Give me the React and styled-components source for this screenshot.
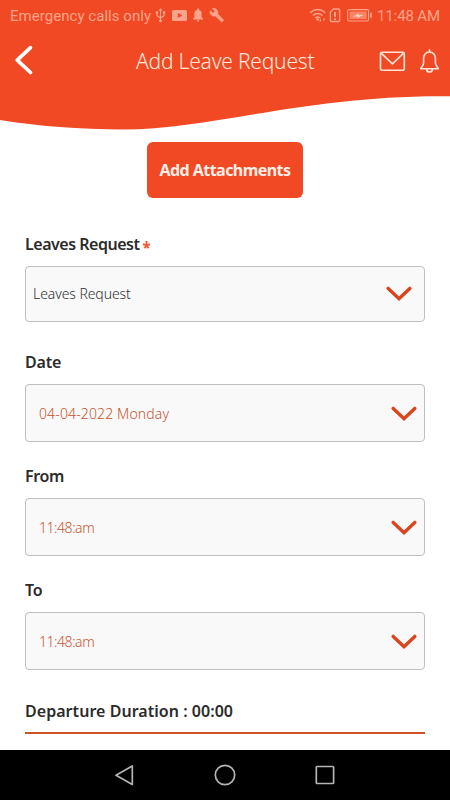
import React from "react";
import styled, { createGlobalStyle } from "styled-components";

const GlobalStyle = createGlobalStyle`
  * { box-sizing: border-box; }
  body { margin: 0; background: #fff; }
`;

const Screen = styled.main`
  width: 450px;
  height: 800px;
  display: flex;
  flex-direction: column;
  overflow: hidden;
  background: #fff;
  font-family: "Noto Sans", "Open Sans", sans-serif;
  white-space: nowrap;
`;

const Header = styled.header`
  position: relative;
  flex: none;
  height: 142px;
`;

const Wave = styled.svg`
  position: absolute;
  inset: 0;
`;

const StatusBar = styled.div`
  position: relative;
  display: flex;
  align-items: center;
  height: 32px;
  padding: 0 10px;
  color: #ffa48b;
  font: 400 15px/32px Roboto, sans-serif;
`;

const Carrier = styled.span`
  width: 145px;
  letter-spacing: 0.04px;
`;

const Clock = styled.span`
  width: 63px;
  margin-left: 5px;
  letter-spacing: -0.12px;
`;

const StatusIcons = styled.svg`
  flex: none;
  margin-left: ${({ $push }) => ($push ? "auto" : "0")};
`;

const TitleBar = styled.div`
  position: relative;
  display: grid;
  grid-template-columns: 136px 1fr 28px 22px;
  align-items: center;
  height: 58px;
  padding-right: 9px;
`;

const IconButton = styled.button`
  display: flex;
  align-items: center;
  height: 40px;
  padding: 0 0 0 ${({ $inset }) => $inset || 0}px;
  border: 0;
  background: none;
`;

const MailButton = styled(IconButton)`
  margin-left: -12px;
`;

const Title = styled.h1`
  margin: 0;
  color: #ffeadf;
  font-size: 21px;
  font-weight: 300;
  line-height: 30px;
  letter-spacing: -0.2px;
`;

const Form = styled.form`
  flex: 1;
  display: flex;
  flex-direction: column;
  padding: 0 25px;
`;

const AttachButton = styled.button`
  align-self: center;
  width: 156px;
  height: 56px;
  padding: 0;
  border: 0;
  border-radius: 6px;
  background: #f04923;
  color: #ffeee6;
  font: 700 16px/22px "Noto Sans", sans-serif;
  letter-spacing: -0.55px;
`;

const Field = styled.section`
  display: flex;
  flex-direction: column;
  margin-top: ${({ $gap }) => $gap}px;
`;

const Label = styled.label`
  display: flex;
  height: 24px;
  margin-bottom: 10px;
  color: #2b2b2b;
  font-size: 16px;
  font-weight: 600;
  line-height: 24px;
  letter-spacing: ${({ $tracking }) => $tracking}px;
`;

const Required = styled.span`
  margin-left: 3px;
  padding-top: 3px;
  color: #ee5a37;
  font-size: 15px;
  font-weight: 800;
`;

const Select = styled.div`
  display: flex;
  align-items: center;
  justify-content: space-between;
  height: ${({ $compact }) => ($compact ? 56 : 58)}px;
  padding: ${({ $compact }) => ($compact ? "0 12px 0 7px" : "1px 7px 0 13px")};
  border: 1px solid #bfbfbf;
  border-radius: 4px;
  background: #f9f9f9;
  color: ${({ $compact }) => ($compact ? "#303030" : "#c95531")};
  font-size: 14px;
  font-weight: 300;
  letter-spacing: ${({ $tracking }) => $tracking}px;
`;

const Value = styled.span`
  padding-bottom: 1px;
`;

const Duration = styled.div`
  height: 36px;
  margin-top: 28px;
  padding-top: 1px;
  border-bottom: 2px solid #cf5227;
  color: #2b2b2b;
  font-size: 16px;
  font-weight: 600;
  line-height: 24px;
  letter-spacing: 0.04px;
`;

const NavBar = styled.nav`
  flex: none;
  display: flex;
  justify-content: center;
  align-items: center;
  gap: 76px;
  height: 50px;
  background: #000;
`;

const NavIcon = styled.svg`
  width: 24px;
  height: 24px;
  fill: none;
  stroke: #b4b4b4;
  stroke-width: 1.7;
  stroke-linejoin: round;
`;

function Chevron() {
  return (
    <svg width="26" height="16" viewBox="0 0 26 16" fill="none">
      <path d="M2.2 2.4 13 12.7 23.8 2.4" stroke="#dc441d" strokeWidth="3.4" strokeLinecap="round" strokeLinejoin="miter" />
    </svg>
  );
}

const fields = [
  { label: "Leaves Request", value: "Leaves Request", required: true, compact: true, gap: 34, labelTracking: -0.48, tracking: -0.08 },
  { label: "Date", value: "04-04-2022 Monday", gap: 28, labelTracking: -0.2, tracking: 0.13 },
  { label: "From", value: "11:48:am", gap: 22, labelTracking: -0.4, tracking: -0.45 },
  { label: "To", value: "11:48:am", gap: 22, labelTracking: -0.3, tracking: -0.45 },
];

export default function App() {
  return (
    <Screen>
      <GlobalStyle />
      <Header>
        <Wave width="450" height="142" viewBox="0 0 450 142">
          <path fill="#f04923" d="M0 0H450V96.3C310 94.5 210 129.5 123 129.5C80 129.5 38 126 0 120Z" />
        </Wave>
        <StatusBar>
          <Carrier>Emergency calls only</Carrier>
          <StatusIcons width="72" height="20" viewBox="155 6 72 20" fill="#ffa48b">
            <path d="M160.5 9v12M157 12.5v3.3l3.5 2.2 3.5-2.2v-3.3" fill="none" stroke="#ffa48b" strokeWidth="1.1" />
            <path d="m158.7 10.7 1.8-2.7 1.8 2.7zM155.8 11.3h2.4v2.4h-2.4zM162.8 11.3h2.4v2.4h-2.4z" />
            <circle cx="160.5" cy="20.7" r="1.5" />
            <path fillRule="evenodd" d="M173.5 10h12q1.5 0 1.5 1.5v8q0 1.5-1.5 1.5h-12q-1.5 0-1.5-1.5v-8q0-1.5 1.5-1.5Zm4.3 3v5l4.5-2.5Z" />
            <path d="M193 19.5v-1l1.3-1.2v-3.5q0-3.2 2.8-3.8v-.9q0-.8.9-.8t.9.8v.9q2.8.6 2.8 3.8v3.5l1.3 1.2v1Zm3.6.7h2.8q-.2 1.5-1.4 1.5t-1.4-1.5Z" />
            <path d="M223.8 20.2 217.7 14q.8-2.6-1-4.4-1.8-1.9-4.4-1.1l2.7 2.8-2 2-2.8-2.7q-.9 2.6 1.1 4.5 1.8 1.7 4.2.9l6.2 6.1Z" stroke="#ffa48b" strokeWidth=".6" strokeLinejoin="round" />
          </StatusIcons>
          <StatusIcons $push width="64" height="20" viewBox="308 6 64 20" fill="none" stroke="#ffa48b">
            <path d="M310.2 12.8q7.5-6.4 15 0M312.8 15.5q4.9-4 9.8 0M315.2 18q2.5-2 5 0" strokeWidth="1.4" />
            <path fill="#ffa48b" stroke="none" d="m316 19.2 1.7-1.3 1.7 1.3-1.7 2ZM321 18v3.5h-1.8ZM323.4 22v-3.5h1.8Z" />
            <path d="M333.4 9h5.2q1 0 1 1v10.5q0 1-1 1h-7.2q-1 0-1-1V12Z" strokeWidth="1.3" />
            <path d="M335 12v5M335 18.3v1.6" strokeWidth="1.8" />
            <rect x="347.6" y="9.6" width="21" height="11.4" rx="1.7" strokeWidth="1.1" />
            <rect x="349.5" y="11.5" width="17.2" height="7.6" fill="#f88467" stroke="none" />
            <path d="M371 12.7v5" strokeWidth="1.6" />
            <path d="m353 16.5 6-3-.4 1.5h4.8l-6 3 .5-1.5Z" fill="#ffd0c2" stroke="none" />
          </StatusIcons>
          <Clock>11:48 AM</Clock>
        </StatusBar>
        <TitleBar>
          <IconButton $inset={14} aria-label="Back">
            <svg width="20" height="32" viewBox="0 0 20 32" fill="none">
              <path d="M16.5 2.7 3.2 15.2l13.3 12.3" stroke="#fff" strokeWidth="3.7" strokeLinecap="round" strokeLinejoin="round" />
            </svg>
          </IconButton>
          <Title>Add Leave Request</Title>
          <MailButton aria-label="Messages">
            <svg width="28" height="22" viewBox="0 0 28 22" fill="none" stroke="#ffe3d8" strokeWidth="1.6" strokeLinejoin="round">
              <rect x="1.5" y="2.3" width="23.8" height="18" rx="1.5" />
              <path d="m2.2 3.2 11.2 10.6L24.6 3.2" />
            </svg>
          </MailButton>
          <IconButton aria-label="Notifications">
            <svg width="22" height="28" viewBox="0 0 22 28" fill="none" stroke="#ffe3d8" strokeWidth="1.6" strokeLinejoin="round">
              <path d="M10.5 2.2v2.9M10.5 5.1c-3.9 0-5.9 3-5.9 6.5v4.5c0 2.4-2 3.4-2.9 5.6h17.7c-.8-2.2-3-3.2-3-5.6v-4.5c0-3.5-2-6.5-5.9-6.5ZM7.4 21.8c.4 4.2 5.8 4.2 6.2 0" />
            </svg>
          </IconButton>
        </TitleBar>
      </Header>
      <Form>
        <AttachButton type="button">Add Attachments</AttachButton>
        {fields.map((field) => (
          <Field key={field.label} $gap={field.gap}>
            <Label $tracking={field.labelTracking}>
              {field.label}
              {field.required && <Required>*</Required>}
            </Label>
            <Select $compact={field.compact} $tracking={field.tracking}>
              <Value>{field.value}</Value>
              <Chevron />
            </Select>
          </Field>
        ))}
        <Duration>Departure Duration : 00:00</Duration>
      </Form>
      <NavBar>
        <NavIcon viewBox="0 0 24 24"><path d="M19.3 3v18.5L3 12.3Z" /></NavIcon>
        <NavIcon viewBox="0 0 24 24"><circle cx="12" cy="12" r="9.7" /></NavIcon>
        <NavIcon viewBox="0 0 24 24"><rect x="3.3" y="3.5" width="17.3" height="17" rx=".7" /></NavIcon>
      </NavBar>
    </Screen>
  );
}
